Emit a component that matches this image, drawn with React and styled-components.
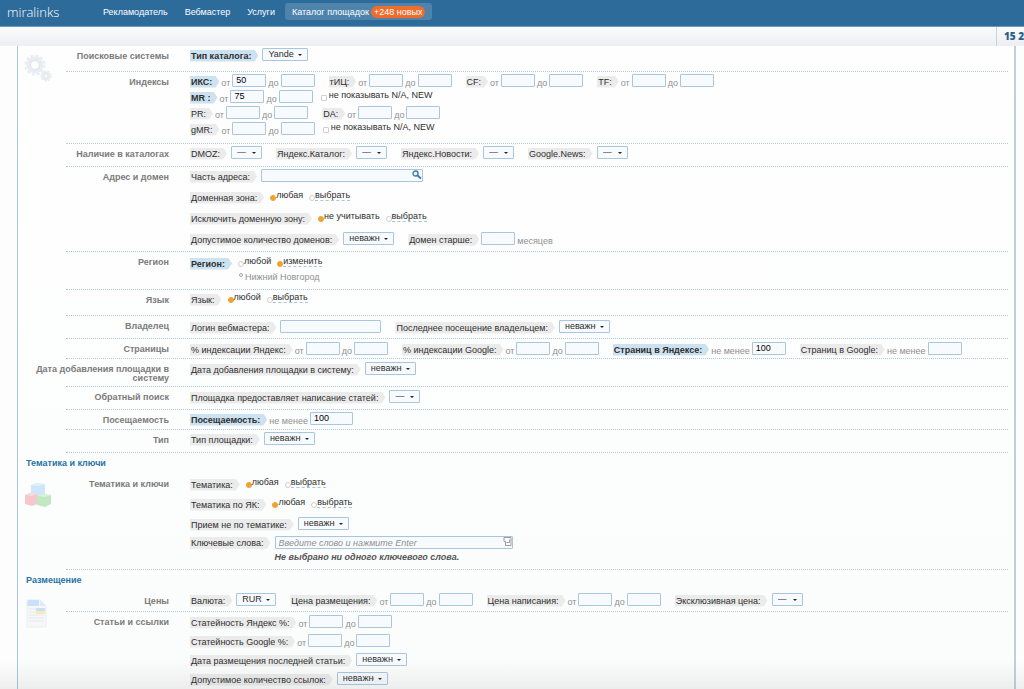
import React, { useId } from 'react';
import styled, { ThemeProvider, createGlobalStyle } from 'styled-components';

const theme = {
  colors: {
    header: '#2d6b9b',
    headerActive: '#4e83ac',
    badge: '#ee6c2c',
    line: '#b3cbde',
    border: '#a9c6dc',
    field: '#f7fbff',
    tag: '#ebebeb',
    tagActive: '#cde2f0',
    text: '#2e2e2e',
    muted: '#909090',
    label: '#7b7b7b',
    title: '#2a73a4',
    radio: '#f0a22f',
  },
};

const GlobalStyle = createGlobalStyle`
  * {
    box-sizing: border-box;
  }

  body {
    margin: 0;
    background: #fdfdfe;
    color: #2e2e2e;
    font-family: 'Liberation Sans', Arial, sans-serif;
    font-size: 9px;
    line-height: 12px;
  }

  input, select, button {
    font: inherit;
    color: inherit;
  }
`;

const Page = styled.div`
  min-height: 100vh;
  display: flex;
  flex-direction: column;
  overflow: hidden;

  &:after {
    content: '';
    position: fixed;
    left: 0;
    right: 0;
    bottom: 0;
    height: 28px;
    background: linear-gradient(180deg, rgba(90, 90, 90, 0), rgba(90, 90, 90, 0.09));
    pointer-events: none;
  }
`;

const Header = styled.header`
  height: 27px;
  display: flex;
  align-items: center;
  padding: 0 7px 3px;
  background: ${props => props.theme.colors.header};
  border-bottom: 1px solid #6f9dbf;
`;

const Logo = styled.a`
  width: 89px;
  color: #fff;
  font-family: 'Open Sans', sans-serif;
  font-size: 13px;
  font-weight: 300;
  line-height: 20px;
  text-decoration: none;
`;

const Nav = styled.nav`
  display: flex;
  align-items: center;
  gap: 3px;
`;

const NavLink = styled.a`
  display: flex;
  align-items: center;
  gap: 2px;
  height: 17px;
  padding: 0 7px;
  border-radius: 3px;
  background: ${props => (props.$active ? props.theme.colors.headerActive : 'transparent')};
  color: #fff;
  font-size: 9px;
  text-decoration: none;
`;

const Badge = styled.span`
  height: 12px;
  padding: 0 3px;
  border-radius: 6px;
  background: ${props => props.theme.colors.badge};
`;

const SubBar = styled.div`
  height: 19px;
  display: flex;
  justify-content: flex-end;
  background: linear-gradient(180deg, #fafbfc, #eceff3);
`;

const Balance = styled.div`
  width: 28px;
  padding-left: 7px;
  border-left: 1px solid #c3d3df;
  color: #2f5f86;
  font-family: 'Open Sans', sans-serif;
  font-size: 10px;
  font-weight: 800;
  line-height: 18px;
  white-space: nowrap;
  overflow: hidden;
`;

const Panel = styled.main`
  flex: 1;
  margin: 0 8px 0 17px;
  padding-right: 6px;
  border-left: 1px solid ${props => props.theme.colors.border};
  border-right: 2px solid #c0d0db;
  background: linear-gradient(180deg, #fefefe, #fbfdfc);
`;

const Section = styled.section`
  display: grid;
  grid-template-columns: 48px minmax(0, 1fr);
`;

const SectionTitle = styled.h2`
  grid-column: 1 / -1;
  margin: 0;
  padding-left: 8px;
  color: ${props => props.theme.colors.title};
  font-size: 9px;
  line-height: 21px;
`;

const SectionIcon = styled.div`
  padding: 8px 0 0 6px;

  svg {
    display: block;
  }
`;

const Row = styled.div`
  display: flex;
  gap: 21px;
  min-height: ${props => props.$height}px;
  border-bottom: 1px ${props => (props.$last ? 'none' : 'dotted')} ${props => props.theme.colors.line};
`;

const RowLabel = styled.div`
  flex: none;
  width: 136px;
  margin-left: -33px;
  padding-top: 6px;
  color: ${props => props.theme.colors.label};
  font-size: 9px;
  font-weight: bold;
  line-height: 9px;
  text-align: right;
`;

const Lines = styled.div`
  display: flex;
  flex-direction: column;
  gap: ${props => props.$gap || 0}px;
  padding-top: ${props => props.$top ?? 1}px;
`;

const Line = styled.div`
  display: flex;
  align-items: center;
  gap: 14px;
  height: 16px;
  white-space: nowrap;
`;

const FieldBox = styled.div`
  display: flex;
  align-items: center;
  gap: ${props => props.$gap || 4}px;
`;

const Tag = styled.label`
  height: 12px;
  margin-top: 1px;
  padding: 0 7px 0 1px;
  background: ${props => (props.$active ? props.theme.colors.tagActive : props.theme.colors.tag)};
  clip-path: polygon(0 0, calc(100% - 4px) 0, 100% 50%, calc(100% - 4px) 100%, 0 100%);
  font-weight: ${props => (props.$active ? 'bold' : 'normal')};
`;

const Muted = styled.label`
  padding-top: 3px;
  color: ${props => props.theme.colors.muted};
`;

const TextInput = styled.input`
  width: ${props => props.$width || 34}px;
  height: 13px;
  margin: 0 0 2px;
  padding: 0 3px;
  border: 1px solid ${props => props.theme.colors.border};
  border-radius: 1px;
  background: ${props => props.theme.colors.field};
  color: #000;
  outline: none;

  &::placeholder {
    color: ${props => props.theme.colors.muted};
    font-style: italic;
    opacity: 1;
  }
`;

const InputWrap = styled.div`
  position: relative;
  display: flex;

  svg {
    position: absolute;
    top: 1px;
    right: 1px;
  }
`;

const SelectWrap = styled.div`
  position: relative;
  display: flex;
  margin-bottom: 2px;

  &:after {
    content: '';
    position: absolute;
    top: 6px;
    right: 6px;
    border: 2px solid transparent;
    border-top-color: #222;
    border-bottom: 0;
    pointer-events: none;
  }
`;

const SelectInput = styled.select`
  width: ${props => props.$width}px;
  height: 13px;
  padding: 0 13px 0 5px;
  border: 1px solid ${props => props.theme.colors.border};
  border-radius: 1px;
  background: ${props => props.theme.colors.field};
  line-height: 11px;
  appearance: none;
  outline: none;
`;

const Choice = styled.label`
  display: flex;
  align-items: center;
  gap: ${props => props.$gap || 0}px;
  padding-bottom: 4px;
  color: ${props => props.theme.colors.text};
`;

const ChoiceText = styled.span`
  line-height: 10px;
  border-bottom: 1px ${props => (props.$dashed ? 'dashed' : 'none')} ${props => props.theme.colors.border};
`;

const Mark = styled.input`
  flex: none;
  width: 6px;
  height: 6px;
  margin: 5px 0 0;
  border: 1px solid #cfcfcf;
  border-radius: ${props => (props.type === 'radio' ? '50%' : '1px')};
  background: #fff;
  appearance: none;

  &:checked {
    border-color: ${props => props.theme.colors.radio};
    background: ${props => props.theme.colors.radio};
  }
`;

const Region = styled.div`
  display: flex;
  align-items: center;
  gap: 2px;
  padding-left: 49px;
  color: ${props => props.theme.colors.muted};
`;

const Dot = styled.span`
  width: 4px;
  height: 4px;
  margin-bottom: 4px;
  border: 1px solid #a5a5a5;
  border-radius: 50%;
`;

const KeywordField = styled.div`
  display: flex;
  align-items: flex-start;
  gap: 4px;
  height: 28px;
  white-space: nowrap;
`;

const Hint = styled.p`
  margin: 0;
  color: #555;
  font-weight: bold;
  font-style: italic;
`;

function Range({ label, from, active, note }) {
  const id = useId();
  return (
    <FieldBox $gap={2} role="group" aria-labelledby={`${id}-tag`}>
      <Tag as="span" id={`${id}-tag`} $active={active}>{label}</Tag>
      <Muted htmlFor={`${id}-from`}>от</Muted>
      <TextInput id={`${id}-from`} defaultValue={from} />
      <Muted htmlFor={`${id}-to`}>до</Muted>
      <TextInput id={`${id}-to`} />
      {note && <Note>{note}</Note>}
    </FieldBox>
  );
}

const NoteBox = styled.div`
  padding-left: 6px;
`;

function Note({ children }) {
  return (
    <NoteBox>
      <Choice $gap={2}>
        <Mark type="checkbox" />
        <ChoiceText>{children}</ChoiceText>
      </Choice>
    </NoteBox>
  );
}

function Select({ label, value = 'неважно', width = 51, active }) {
  const id = useId();
  return (
    <FieldBox>
      <Tag htmlFor={id} $active={active}>{label}</Tag>
      <SelectWrap>
        <SelectInput id={id} $width={width}>
          <option>{value}</option>
        </SelectInput>
      </SelectWrap>
    </FieldBox>
  );
}

function AtLeast({ label, value, active, width }) {
  const id = useId();
  return (
    <FieldBox $gap={2}>
      <Tag htmlFor={id} $active={active}>{label}</Tag>
      <Muted htmlFor={id}>не менее</Muted>
      <TextInput id={id} defaultValue={value} $width={width} />
    </FieldBox>
  );
}

function Radios({ label, options, selected = 0, active }) {
  const id = useId();
  return (
    <FieldBox $gap={6} role="radiogroup" aria-labelledby={`${id}-tag`}>
      <Tag as="span" id={`${id}-tag`} $active={active}>{label}</Tag>
      {options.map((option, i) => (
        <Choice key={option}>
          <Mark type="radio" name={id} defaultChecked={i === selected} />
          <ChoiceText $dashed={i === 1}>{option}</ChoiceText>
        </Choice>
      ))}
    </FieldBox>
  );
}

const GearsIcon = () => (
  <svg width="28" height="30" viewBox="0 0 28 30" fill="none" stroke="#e9edf2">
    <circle cx="11" cy="11" r="6.5" strokeWidth="4" />
    <circle cx="11" cy="11" r="9.5" strokeWidth="2" strokeDasharray="3 2" />
    <circle cx="11" cy="11" r="4.5" stroke="#dde4ea" />
    <circle cx="22" cy="22" r="3.5" strokeWidth="2.5" />
    <circle cx="22" cy="22" r="5" strokeWidth="1.5" strokeDasharray="2 1.5" />
    <circle cx="22" cy="22" r="2" stroke="#dde4ea" />
  </svg>
);

const CubesIcon = () => (
  <svg width="28" height="26" viewBox="0 0 28 26">
    <path d="M7 3l6-2 8 1v10l-6 2-8-1z" fill="#cde6f9" />
    <path d="M7 3l6-2 8 1-6 2z" fill="#e0f0fc" />
    <path d="M1 13l5-2 7 1v10l-5 2-7-2z" fill="#f5c6cb" />
    <path d="M1 13l5-2 7 1-5 2z" fill="#f9dcdf" />
    <path d="M13 14l7-2 7 1v9l-6 3-8-2z" fill="#c1e9c1" />
    <path d="M13 14l7-2 7 1-6 2z" fill="#d9f3d8" />
  </svg>
);

const ArticleIcon = () => (
  <svg width="26" height="30" viewBox="0 0 26 30">
    <path d="M3 1h13l6 6v21H3z" fill="#f6f7f8" stroke="#eceeef" />
    <path d="M4 1h11v6H3z" fill="#c8e3f9" />
    <path d="M16 1l6 6h-6z" fill="#dcecf9" />
    <path d="M5 10h7M5 13h7M5 16h15M5 19h15M5 22h15" stroke="#e6e9eb" />
    <path d="M12 9h9v3h-9z" fill="#c6e0f7" />
    <path d="M12 12h9v3h-9z" fill="#f8e9bd" />
  </svg>
);

const SearchIcon = () => (
  <svg width="10" height="10" viewBox="0 0 10 10" fill="none" stroke="#3d7fa8">
    <circle cx="3.5" cy="3.5" r="2.5" strokeWidth="1.4" />
    <path d="M5.5 5.5l3.500 3" strokeWidth="2" />
  </svg>
);

const EnterIcon = () => (
  <svg width="9" height="9" viewBox="0 0 9 9" fill="#fff" stroke="#9a9a9a">
    <path d="M1 .5h7v8H2.5v-4H1z" />
    <path d="M6.5 2.5v3h-3" fill="none" />
  </svg>
);

function App() {
  return (
    <ThemeProvider theme={theme}>
      <GlobalStyle />
      <Page>
        <Header>
          <Logo href="#">miralinks</Logo>
          <Nav>
            <NavLink href="#">Рекламодатель</NavLink>
            <NavLink href="#">Вебмастер</NavLink>
            <NavLink href="#">Услуги</NavLink>
            <NavLink href="#" $active>
              Каталог площадок
              <Badge>+248 новых</Badge>
            </NavLink>
          </Nav>
        </Header>
        <SubBar>
          <Balance>15 2</Balance>
        </SubBar>

        <Panel>
          <Section>
            <SectionIcon><GearsIcon /></SectionIcon>
            <div>
              <Row $height={26}>
                <RowLabel>Поисковые системы</RowLabel>
                <Lines>
                  <Line><Select label="Тип каталога:" value="Yandex" width={46} active /></Line>
                </Lines>
              </Row>
              <Row $height={72}>
                <RowLabel>Индексы</RowLabel>
                <Lines>
                  <Line>
                    <Range label="ИКС:" from="50" active />
                    <Range label="тИЦ:" />
                    <Range label="CF:" />
                    <Range label="TF:" />
                  </Line>
                  <Line><Range label="MR :" from="75" active note="не показывать N/A, NEW" /></Line>
                  <Line>
                    <Range label="PR:" />
                    <Range label="DA:" />
                  </Line>
                  <Line><Range label="gMR:" note="не показывать N/A, NEW" /></Line>
                </Lines>
              </Row>
              <Row $height={23}>
                <RowLabel>Наличие в каталогах</RowLabel>
                <Lines>
                  <Line>
                    <Select label="DMOZ:" value="—" width={31} />
                    <Select label="Яндекс.Каталог:" value="—" width={31} />
                    <Select label="Яндекс.Новости:" value="—" width={31} />
                    <Select label="Google.News:" value="—" width={31} />
                  </Line>
                </Lines>
              </Row>
              <Row $height={85}>
                <RowLabel>Адрес и домен</RowLabel>
                <Lines $gap={5}>
                  <Line>
                    <FieldBox>
                      <Tag htmlFor="address">Часть адреса:</Tag>
                      <InputWrap>
                        <TextInput id="address" $width={162} />
                        <SearchIcon />
                      </InputWrap>
                    </FieldBox>
                  </Line>
                  <Line><Radios label="Доменная зона:" options={['любая', 'выбрать']} /></Line>
                  <Line><Radios label="Исключить доменную зону:" options={['не учитывать', 'выбрать']} /></Line>
                  <Line>
                    <Select label="Допустимое количество доменов:" />
                    <FieldBox $gap={2}>
                      <Tag htmlFor="age">Домен старше:</Tag>
                      <TextInput id="age" />
                      <Muted htmlFor="age">месяцев</Muted>
                    </FieldBox>
                  </Line>
                </Lines>
              </Row>
              <Row $height={38}>
                <RowLabel>Регион</RowLabel>
                <Lines $top={3}>
                  <Line><Radios label="Регион:" options={['любой', 'изменить']} selected={1} active /></Line>
                  <Region><Dot />Нижний Новгород</Region>
                </Lines>
              </Row>
              <Row $height={26}>
                <RowLabel>Язык</RowLabel>
                <Lines>
                  <Line><Radios label="Язык:" options={['любой', 'выбрать']} /></Line>
                </Lines>
              </Row>
              <Row $height={23}>
                <RowLabel>Владелец</RowLabel>
                <Lines $top={3}>
                  <Line>
                    <FieldBox>
                      <Tag htmlFor="login">Логин вебмастера:</Tag>
                      <TextInput id="login" $width={101} />
                    </FieldBox>
                    <Select label="Последнее посещение владельцем:" />
                  </Line>
                </Lines>
              </Row>
              <Row $height={20}>
                <RowLabel>Страницы</RowLabel>
                <Lines $top={2}>
                  <Line>
                    <Range label="% индексации Яндекс:" />
                    <Range label="% индексации Google:" />
                    <AtLeast label="Страниц в Яндексе:" value="100" active />
                    <AtLeast label="Страниц в Google:" />
                  </Line>
                </Lines>
              </Row>
              <Row $height={28}>
                <RowLabel>Дата добавления площадки в систему</RowLabel>
                <Lines $top={2}>
                  <Line><Select label="Дата добавления площадки в систему:" /></Line>
                </Lines>
              </Row>
              <Row $height={23}>
                <RowLabel>Обратный поиск</RowLabel>
                <Lines $top={2}>
                  <Line><Select label="Площадка предоставляет написание статей:" value="—" width={31} /></Line>
                </Lines>
              </Row>
              <Row $height={20}>
                <RowLabel>Посещаемость</RowLabel>
                <Lines>
                  <Line><AtLeast label="Посещаемость:" value="100" width={43} active /></Line>
                </Lines>
              </Row>
              <Row $height={23}>
                <RowLabel>Тип</RowLabel>
                <Lines>
                  <Line><Select label="Тип площадки:" /></Line>
                </Lines>
              </Row>
            </div>
          </Section>

          <Section>
            <SectionTitle>Тематика и ключи</SectionTitle>
            <SectionIcon><CubesIcon /></SectionIcon>
            <div>
              <Row $height={96}>
                <RowLabel>Тематика и ключи</RowLabel>
                <Lines $top={2} $gap={4}>
                  <Line><Radios label="Тематика:" options={['любая', 'выбрать']} /></Line>
                  <Line><Radios label="Тематика по ЯК:" options={['любая', 'выбрать']} /></Line>
                  <Line><Select label="Прием не по тематике:" /></Line>
                  <KeywordField>
                    <Tag htmlFor="keywords">Ключевые слова:</Tag>
                    <div>
                      <InputWrap>
                        <TextInput id="keywords" $width={238} placeholder="Введите слово и нажмите Enter" />
                        <EnterIcon />
                      </InputWrap>
                      <Hint>Не выбрано ни одного ключевого слова.</Hint>
                    </div>
                  </KeywordField>
                </Lines>
              </Row>
            </div>
          </Section>

          <Section>
            <SectionTitle>Размещение</SectionTitle>
            <SectionIcon><ArticleIcon /></SectionIcon>
            <div>
              <Row $height={21}>
                <RowLabel>Цены</RowLabel>
                <Lines>
                  <Line>
                    <Select label="Валюта:" value="RUR" width={40} />
                    <Range label="Цена размещения:" />
                    <Range label="Цена написания:" />
                    <Select label="Эксклюзивная цена:" value="—" width={31} />
                  </Line>
                </Lines>
              </Row>
              <Row $height={75} $last>
                <RowLabel>Статьи и ссылки</RowLabel>
                <Lines $top={2} $gap={3}>
                  <Line><Range label="Статейность Яндекс %:" /></Line>
                  <Line><Range label="Статейность Google %:" /></Line>
                  <Line><Select label="Дата размещения последней статьи:" /></Line>
                  <Line><Select label="Допустимое количество ссылок:" /></Line>
                </Lines>
              </Row>
            </div>
          </Section>
        </Panel>
      </Page>
    </ThemeProvider>
  );
}

export default App;
